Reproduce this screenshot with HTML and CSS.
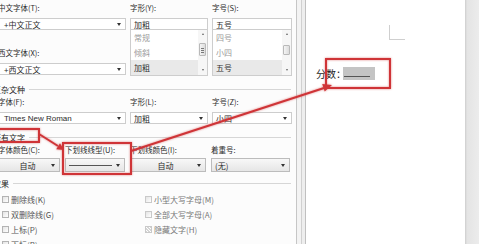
FILE: index.html
```html
<!DOCTYPE html>
<html>
<head>
    <meta charset="utf-8">
    <title>字体</title>
    <link rel="stylesheet" href="styles.css">
</head>
<body>
<div class="screen">
    <div class="dialog">
        <div class="fields">
            <div class="col">
                <div class="lbl">中文字体(T):</div>
                <div class="combo"><span>+中文正文</span><i class="arrow"></i></div>
                <div class="lbl second">西文字体(X):</div>
                <div class="combo"><span>+西文正文</span><i class="arrow"></i></div>
            </div>
            <div class="col">
                <div class="lbl">字形(Y):</div>
                <div class="input">加粗</div>
                <div class="list">
                    <div class="items">
                        <div class="item">常规</div>
                        <div class="item">倾斜</div>
                        <div class="item sel">加粗</div>
                    </div>
                    <div class="scroll">
                        <i class="up"></i>
                        <i class="thumb grip"></i>
                        <i class="down"></i>
                    </div>
                </div>
            </div>
            <div class="col">
                <div class="lbl">字号(S):</div>
                <div class="input">五号</div>
                <div class="list">
                    <div class="items">
                        <div class="item">四号</div>
                        <div class="item">小四</div>
                        <div class="item sel">五号</div>
                    </div>
                    <div class="scroll">
                        <i class="up"></i>
                        <i class="thumb low"></i>
                        <i class="down"></i>
                    </div>
                </div>
            </div>
        </div>

        <div class="group"><span>复杂文种</span></div>
        <div class="fields">
            <div class="col">
                <div class="lbl">字体(F):</div>
                <div class="combo"><span class="latin">Times New Roman</span><i class="arrow"></i></div>
            </div>
            <div class="col">
                <div class="lbl">字形(L):</div>
                <div class="combo"><span>加粗</span><i class="arrow"></i></div>
            </div>
            <div class="col">
                <div class="lbl">字号(Z):</div>
                <div class="combo"><span>小四</span><i class="arrow"></i></div>
            </div>
        </div>

        <div class="group"><span>所有文字</span></div>
        <div class="fields colors">
            <div class="col">
                <div class="lbl">字体颜色(C):</div>
                <div class="combo btn"><span class="center">自动</span><i class="arrow"></i></div>
            </div>
            <div class="col">
                <div class="lbl">下划线线型(U):</div>
                <div class="combo btn"><i class="sample"></i><i class="arrow"></i></div>
            </div>
            <div class="col">
                <div class="lbl">下划线颜色(I):</div>
                <div class="combo btn"><span class="center">自动</span><i class="arrow"></i></div>
            </div>
            <div class="col">
                <div class="lbl">着重号:</div>
                <div class="combo btn"><span>(无)</span><i class="arrow"></i></div>
            </div>
        </div>

        <div class="group fx"><span>效果</span></div>
        <div class="effects">
            <div class="check"><i class="box"></i>删除线(K)</div>
            <div class="check dim"><i class="box"></i>小型大写字母(M)</div>
            <div class="check"><i class="box"></i>双删除线(G)</div>
            <div class="check dim"><i class="box"></i>全部大写字母(A)</div>
            <div class="check"><i class="box"></i>上标(P)</div>
            <div class="check dim"><i class="box hatch"></i>隐藏文字(H)</div>
            <div class="check"><i class="box"></i>下标(B)</div>
        </div>
    </div>

    <div class="frame"></div>

    <div class="page">
        <div class="corner"></div>
        <div class="score">
            <span>分数：</span>
            <span class="blank"><i></i></span>
        </div>
    </div>

    <div class="edge"></div>

    <!-- red annotations drawn over the screenshot -->
    <svg class="marks" viewBox="0 0 479 244">
        <g fill="none" stroke="#cf3437" stroke-width="2">
            <rect x="-2" y="129" width="41" height="13"/>
            <rect x="63" y="143" width="68" height="31"/>
            <rect x="326" y="59" width="64" height="29"/>
            <line x1="39" y1="134" x2="58" y2="146"/>
            <line x1="131" y1="151" x2="324" y2="88"/>
        </g>
        <g fill="#cf3437">
            <polygon points="64,150 56.2,149.2 60,143.3"/>
            <polygon points="332,85 324.7,91.6 322.2,84"/>
        </g>
    </svg>
</div>
</body>
</html>
```

FILE: styles.css
```css
* {
    box-sizing: border-box;
}
body {
    margin: 0;
    width: 479px;
    height: 244px;
    overflow: hidden;
    background: #fff;
    font-family: "Noto Sans CJK SC", "Noto Sans", sans-serif;
    color: #2b2b2b;
}
i {
    display: block;
}
.screen {
    position: relative;
    display: flex;
    height: 244px;
}

/* font dialog */
.dialog {
    flex: none;
    width: 306px;
    margin-left: -10px;
    padding: 2px 5px 0 0;
    background: #fcfcfc;
    font-size: 7.5px;
    overflow: hidden;
}
.fields {
    display: grid;
    grid-template-columns: 128px 78px 80px;
    column-gap: 4px;
    padding-left: 8px;
}
.fields.colors {
    grid-template-columns: 62px 60px 76px 79px;
    column-gap: 5px;
}
.lbl {
    height: 12px;
    line-height: 12px;
    margin-bottom: 4px;
    white-space: nowrap;
}
.lbl.second {
    margin-top: 17px;
}
.colors .lbl {
    margin-bottom: 2px;
}
.combo, .input {
    display: flex;
    align-items: center;
    justify-content: space-between;
    height: 12px;
    padding: 0 4px 0 5px;
    border: 1px solid #cdcdcd;
    background: #fff;
    font-size: 8px;
    white-space: nowrap;
}
.input {
    padding-left: 3px;
}
.fields .col:not(:first-child) .combo {
    padding-left: 3px;
}
.latin {
    font-family: "Liberation Sans", sans-serif;
}
.combo.btn {
    height: 14px;
    background: linear-gradient(#f8f8f8, #e6e6e6);
    border-color: #bcbcbc;
}
.combo .center {
    flex: 1;
    text-align: center;
}
.arrow {
    width: 0;
    height: 0;
    border-left: 2.5px solid transparent;
    border-right: 2.5px solid transparent;
    border-top: 3px solid #333;
}
.sample {
    width: 43px;
    height: 1px;
    background: #555;
}

.list {
    display: flex;
    height: 46px;
    border: 1px solid #cdcdcd;
    border-top: none;
    background: #fff;
}
.items {
    flex: 1;
}
.item {
    height: 15px;
    line-height: 15px;
    padding-left: 3px;
    font-size: 8px;
    color: #9a9a9a;
}
.item.sel {
    background: #e9e9e9;
    color: #333;
}
.scroll {
    width: 9px;
    display: flex;
    flex-direction: column;
    align-items: center;
    padding: 3px 0 4px;
    background: #f6f6f6;
}
.up, .down {
    width: 0;
    height: 0;
    border-left: 1.5px solid transparent;
    border-right: 1.5px solid transparent;
}
.up {
    border-bottom: 2px solid #666;
}
.down {
    margin-top: auto;
    border-top: 2px solid #666;
}
.thumb {
    width: 7px;
    height: 13px;
    margin-top: 8px;
    border: 1px solid #b9b9b9;
    border-radius: 1px;
    background: linear-gradient(to right, #f4f4f4, #dcdcdc);
}
.thumb.grip {
    background: linear-gradient(#777, #777) 1px 4px / 3px 1px no-repeat,
                linear-gradient(#777, #777) 1px 6px / 3px 1px no-repeat,
                linear-gradient(#777, #777) 1px 8px / 3px 1px no-repeat,
                linear-gradient(to right, #f4f4f4, #dcdcdc);
}
.thumb.low {
    height: 10px;
    margin-top: 10px;
}

.group {
    display: flex;
    align-items: center;
    height: 12px;
    margin: 7px 0 1px;
    padding-left: 3px;
    font-size: 8px;
    color: #222;
    white-space: nowrap;
}
.group::after {
    content: "";
    flex: 1;
    height: 1px;
    margin-left: 4px;
    background: #d6d6d6;
}
.group.fx {
    margin: 5px 0 3px;
}

.effects {
    display: grid;
    grid-template-columns: 143px 1fr;
    padding-left: 12px;
}
.check {
    display: flex;
    align-items: center;
    gap: 2px;
    height: 15px;
    font-size: 8px;
    color: #555;
    white-space: nowrap;
}
.box {
    width: 7px;
    height: 7px;
    border: 1px solid #b3b3b3;
    background: linear-gradient(135deg, #e4e4e4, #fff);
}
.check.dim {
    color: #777;
}
.check.dim .box {
    border-color: #c9c9c9;
}
.box.hatch {
    background: repeating-linear-gradient(45deg, #d4d4d4 0 1px, #fff 1px 2px);
}

/* document side */
.frame {
    flex: none;
    width: 10px;
    border-left: 1px solid #c6c6c6;
    border-right: 1px solid #c0c0c0;
    background: linear-gradient(to right, #f3f3f3 0 4px, #d0d0d0 4px 5px, #eeeeee 5px);
}
.page {
    flex: none;
    width: 159px;
    padding: 25px 0 0 10px;
    background: #fff;
}
.corner {
    width: 16px;
    height: 15px;
    margin-left: 73px;
    border-left: 1px solid #cfcfcf;
    border-bottom: 1px solid #cfcfcf;
}
.score {
    display: flex;
    align-items: center;
    height: 14px;
    margin-top: 26px;
    font-size: 10px;
    color: #1e1e1e;
}
.blank {
    display: flex;
    align-items: flex-end;
    width: 32px;
    height: 13px;
    margin-left: -3px;
    padding: 0 5px 3px 1px;
    background: #c4c4c4;
}
.blank i {
    flex: 1;
    border-bottom: 1px solid #555;
}
.edge {
    flex: 1;
    background: linear-gradient(to right, #cdcdcd, #e4e4e4 2px, #ececec);
}

.marks {
    position: absolute;
    left: 0;
    top: 0;
    width: 479px;
    height: 244px;
    overflow: visible;
    filter: drop-shadow(0 0 1px rgba(210, 60, 60, 0.6));
}
```
